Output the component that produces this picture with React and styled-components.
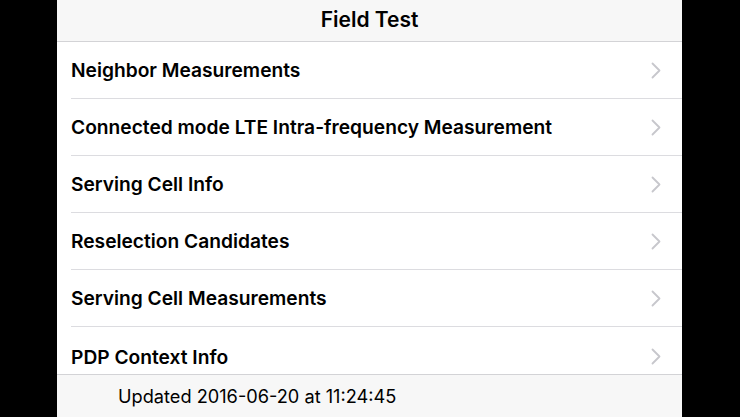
import React from "react";
import styled, { createGlobalStyle } from "styled-components";

const GlobalStyle = createGlobalStyle`
    html, body {
        margin: 0;
        padding: 0;
        background: #000;
    }
    body {
        font-family: Inter, "Noto Sans", "Liberation Sans", sans-serif;
        -webkit-font-smoothing: antialiased;
    }
`;

const items = [
    "Neighbor Measurements",
    "Connected mode LTE Intra-frequency Measurement",
    "Serving Cell Info",
    "Reselection Candidates",
    "Serving Cell Measurements",
    "PDP Context Info"
];

const Chevron = () => (
    <svg width="10" height="17" viewBox="0 0 10 17">
        <path
            d="M1.5 1.5 L8.5 8.5 L1.5 15.5"
            fill="none"
            stroke="#c7c7cc"
            strokeWidth="1.8"
            strokeLinecap="round"
            strokeLinejoin="round"
        />
    </svg>
);

const App = () => (
    <>
        <GlobalStyle />
        <Screen>
            <Header>
                <Title>Field Test</Title>
            </Header>
            <List>
                {items.map((label, i) => (
                    <Row key={label} last={i === items.length - 1}>
                        <Label>{label}</Label>
                        <Chevron />
                    </Row>
                ))}
            </List>
            <Footer>Updated 2016-06-20 at 11:24:45</Footer>
        </Screen>
    </>
);

export default App;

const Screen = styled.div`
    margin-left: 57px;
    width: 625px;
    height: 417px;
    background: #fff;
    display: flex;
    flex-direction: column;
    overflow: hidden;
`;

const Header = styled.header`
    height: 41px;
    flex-shrink: 0;
    background: #f7f7f7;
    border-bottom: 1px solid #d3d3d6;
    display: flex;
    align-items: center;
    justify-content: center;
`;

const Title = styled.h1`
    margin: 0;
    margin-top: -2px;
    font-size: 21px;
    font-weight: 600;
    color: #000;
`;

const List = styled.div`
    flex: 1;
    padding-left: 14px;
    overflow: hidden;
`;

const Row = styled.div`
    height: ${(p) => (p.last ? 49 : 56)}px;
    display: flex;
    align-items: center;
    justify-content: space-between;
    padding-right: 21px;
    border-bottom: ${(p) => (p.last ? "none" : "1px solid #dcdce0")};
    padding-top: ${(p) => (p.last ? 5 : 0)}px;
`;

const Label = styled.span`
    font-size: 19.2px;
    font-weight: 600;
    color: #000;
`;

const Footer = styled.footer`
    height: 42px;
    flex-shrink: 0;
    background: #f7f7f7;
    border-top: 1px solid #d3d3d6;
    display: flex;
    align-items: center;
    padding-left: 61px;
    font-size: 18.2px;
    font-weight: 400;
    color: #000;
`;
